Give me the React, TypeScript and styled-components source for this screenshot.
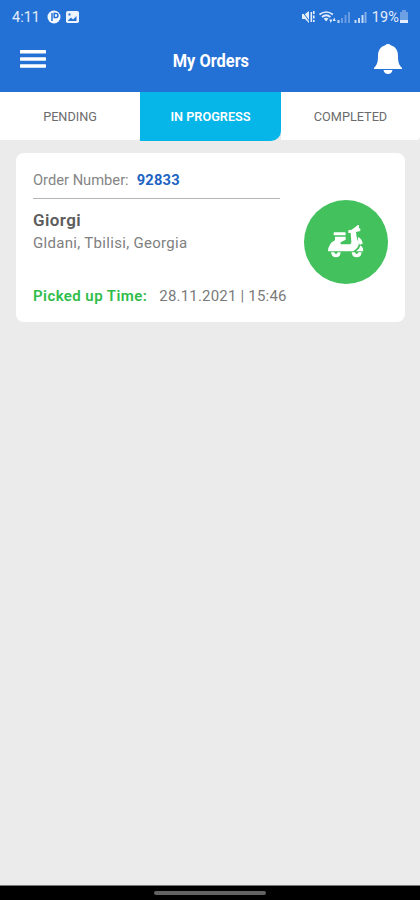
import React from "react";
import styled, { createGlobalStyle } from "styled-components";

const GlobalStyle = createGlobalStyle`
  * { box-sizing: border-box; }
  body { margin: 0; font-family: Roboto, "Liberation Sans", sans-serif; }
`;

const Screen = styled.div`
  display: flex;
  flex-direction: column;
  width: 420px;
  height: 900px;
  overflow: hidden;
  background: #ebebeb;
`;

const TopArea = styled.div`
  height: 92px;
  flex: none;
  background: #2471d5;
  color: #fff;
`;

const StatusBar = styled.div`
  display: flex;
  justify-content: space-between;
  height: 34px;
  padding: 0 11px 0 12px;
`;

const StatusGroup = styled.div`
  display: flex;
  align-items: center;
  color: #e4edfb;
`;

const StatusText = styled.span<{ $spacing?: string }>`
  padding-top: 1px;
  font-size: 14.5px;
  line-height: 34px;
  letter-spacing: ${(p) => p.$spacing ?? "0"};
`;

const StatusIcons = styled.svg<{ $gap?: number }>`
  display: block;
  margin: 0 ${(p) => p.$gap ?? 0}px;
`;

const AppBar = styled.header`
  display: grid;
  grid-template-columns: 60px 1fr 60px;
  height: 58px;
`;

const IconButton = styled.button<{ $pad: string }>`
  display: flex;
  align-items: flex-start;
  padding: ${(p) => p.$pad};
  border: 0;
  background: none;
  color: #fff;
`;

const Title = styled.h1`
  margin: 0;
  padding-left: 2px;
  text-align: center;
  font-size: 18px;
  font-weight: 700;
  line-height: 54px;
  transform: scaleX(0.91);
`;

const Tabs = styled.nav`
  display: grid;
  grid-template-columns: 140px 141px 139px;
  height: 49px;
  flex: none;
`;

const Tab = styled.button<{ $active?: boolean }>`
  height: ${(p) => (p.$active ? 49 : 48)}px;
  padding: ${(p) => (p.$active ? "0" : "1px 0 0")};
  border: 0;
  border-radius: ${(p) => (p.$active ? "0 0 10px 0" : "0 0 4px 0")};
  background: ${(p) => (p.$active ? "#06b6e9" : "#fff")};
  color: ${(p) => (p.$active ? "#fff" : "#6c6c6c")};
  font-family: inherit;
  font-size: 12.7px;
  font-weight: ${(p) => (p.$active ? 600 : 400)};
`;

const Card = styled.article`
  display: flex;
  justify-content: space-between;
  height: 169px;
  margin: 12px 15px 0 16px;
  padding: 0 17px;
  border-radius: 8px;
  background: #fff;
`;

const Details = styled.div`
  width: 247px;
  color: #777;
  white-space: nowrap;
`;

const OrderLine = styled.div`
  display: flex;
  gap: 8px;
  height: 46px;
  padding-top: 17px;
  border-bottom: 1.5px solid #b5b5b5;
  font-size: 14.7px;
  line-height: 20px;
`;

const Label = styled.span`
  color: #858585;
`;

const OrderNumber = styled.span`
  color: #2163c2;
  font-weight: 700;
  letter-spacing: 0.2px;
`;

const Customer = styled.div`
  margin-top: 10px;
  color: #5c5c5c;
  font-size: 17px;
  font-weight: 600;
  line-height: 22px;
  letter-spacing: 0.4px;
`;

const Address = styled.div`
  color: #808080;
  font-size: 15px;
  line-height: 24px;
  letter-spacing: 0.31px;
`;

const PickupLine = styled.div`
  display: flex;
  gap: 12px;
  margin-top: 31px;
  color: #7b7b7b;
  font-size: 15px;
  line-height: 20px;
  letter-spacing: 0.2px;
`;

const PickupLabel = styled.span`
  color: #2fbd4c;
  font-weight: 600;
  letter-spacing: 0.43px;
`;

const Badge = styled.div`
  display: flex;
  align-items: center;
  justify-content: center;
  width: 84px;
  height: 84px;
  margin-top: 47px;
  border-radius: 50%;
  background: #42c15d;
`;

const Spacer = styled.main`
  flex: 1;
`;

const SystemNav = styled.footer`
  display: flex;
  justify-content: center;
  height: 15px;
  padding-top: 5px;
  border-top: 1px solid #777;
  background: #000;
`;

const HomeHandle = styled.div`
  width: 112px;
  height: 4px;
  border-radius: 2px;
  background: #626262;
`;

const NotificationIcons = () => (
  <StatusIcons $gap={7} width="33" height="14" viewBox="0 0 33 14">
    <circle cx="7" cy="7" r="6.5" fill="#f4f8ff" />
    <path d="M5 3v8M7.2 3.2v4.2h2.2c2 0 2-4 0-4z" fill="none" stroke="#2471d5" strokeWidth="1.5" />
    <rect x="19" y="1" width="13" height="12" rx="1.8" fill="#edf4ff" />
    <path d="M21 10.5l3-3 2 2 3.5-3.5v5H21z" fill="#2471d5" />
    <path d="M21.5 3.5h2v2h-2z" fill="#2471d5" />
  </StatusIcons>
);

const SignalIcons = () => (
  <StatusIcons width="66" height="16" viewBox="1 0 66 16" fill="none" stroke="#e4edfb">
    <path d="M1 5h3l4-3v12l-4-4H1z" fill="#e4edfb" stroke="none" />
    <path d="M1 2l8 11" stroke="#2471d5" strokeWidth="1" />
    <path d="M10.3 3v10M12.8 2v3M12.8 6.5v3M12.8 11v2" strokeWidth="1.6" />
    <path d="M18.5 5.5q6.7-5 13.4 0" strokeWidth="1.7" />
    <path d="M21 8q4.2-3.5 8.4 0" strokeWidth="1.7" />
    <path d="M22.7 9.6q2.4-1.8 4.8 0l-2.4 3z" fill="#e4edfb" stroke="none" />
    <path d="M28.3 10.5h3L29.8 14zM31.7 12l1.5-3.5 1.5 3.5z" fill="#e4edfb" stroke="none" />
    <path d="M37.5 14v-3M41 14V9M44.5 14V6M48 14V3" strokeWidth="2" opacity=".35" />
    <path d="M37.5 14v-3" strokeWidth="2" opacity=".7" />
    <path d="M54.5 14v-3M58 14V9M61.5 14V6" strokeWidth="2" opacity=".85" />
    <path d="M64.5 14V3" strokeWidth="2" opacity=".5" />
  </StatusIcons>
);

const BatteryIcon = () => (
  <StatusIcons width="10" height="16" viewBox="0 0 10 16" fill="#e4edfb">
    <path d="M3 1h4v2h2v8H1V3h2z" opacity=".38" />
    <path d="M1 11h8v3H1z" />
  </StatusIcons>
);

const ScooterIcon = () => (
  <svg width="36.67" height="33.33" viewBox="115 105 110 100" fill="#fff">
    <rect x="132" y="127" width="36" height="9" rx="2" />
    <path d="M115 184Q116 160 136 151V140H168V149L153 157V163H178Q185 163 185 155L183 129H176V121Q187 121 193 114L205 105H208V114L212 116V123L199 126L201 140Q202 150 208 157Q208 174 191 184Z" />
    <path d="M205 141Q217 146 219 161L210 164Q203 154 205 141Z" />
    <path d="M199 184Q209 178 213 166Q221 172 221 184Z" />
    <path d="M124 187H153Q152 202 139 202T124 187ZM186 187H216Q215 202 201 202T186 187Z" />
    <path d="M134 186H144Q143 192 139 192T134 186ZM196 186H206Q205 192 201 192T196 186Z" fill="#42c15d" />
  </svg>
);

export default function App() {
  return (
    <Screen>
      <GlobalStyle />
      <TopArea>
        <StatusBar>
          <StatusGroup>
            <StatusText>4:11</StatusText>
            <NotificationIcons />
          </StatusGroup>
          <StatusGroup>
            <SignalIcons />
            <StatusText $spacing="0.1px">&nbsp;19%</StatusText>
            <BatteryIcon />
          </StatusGroup>
        </StatusBar>
        <AppBar>
          <IconButton $pad="16px 0 0 20px" aria-label="Menu">
            <svg width="26" height="18" viewBox="0 0 26 18" fill="currentColor">
              <rect y="0" width="26" height="3.5" rx=".6" />
              <rect y="7.2" width="26" height="3.5" rx=".6" />
              <rect y="14.2" width="26" height="3.5" rx=".6" />
            </svg>
          </IconButton>
          <Title>My Orders</Title>
          <IconButton $pad="10px 0 0 14px" aria-label="Notifications">
            <svg width="28" height="30" viewBox="0 0 28 30" fill="currentColor">
              <path d="M14 0q2 0 2.7 1.3C22 2.7 24 7 24 12c0 6 1 9 4 12v1H0v-1c3-3 4-6 4-12C4 7 6 2.7 11.3 1.3Q12 0 14 0z" />
              <path d="M9.5 26h9q-.8 4-4.5 4t-4.5-4z" />
            </svg>
          </IconButton>
        </AppBar>
      </TopArea>
      <Tabs>
        <Tab>PENDING</Tab>
        <Tab $active>IN PROGRESS</Tab>
        <Tab>COMPLETED</Tab>
      </Tabs>
      <Spacer>
        <Card>
          <Details>
            <OrderLine>
              <Label>Order Number:</Label>
              <OrderNumber>92833</OrderNumber>
            </OrderLine>
            <Customer>Giorgi</Customer>
            <Address>Gldani, Tbilisi, Georgia</Address>
            <PickupLine>
              <PickupLabel>Picked up Time:</PickupLabel>
              <span>28.11.2021 | 15:46</span>
            </PickupLine>
          </Details>
          <Badge>
            <ScooterIcon />
          </Badge>
        </Card>
      </Spacer>
      <SystemNav>
        <HomeHandle />
      </SystemNav>
    </Screen>
  );
}
